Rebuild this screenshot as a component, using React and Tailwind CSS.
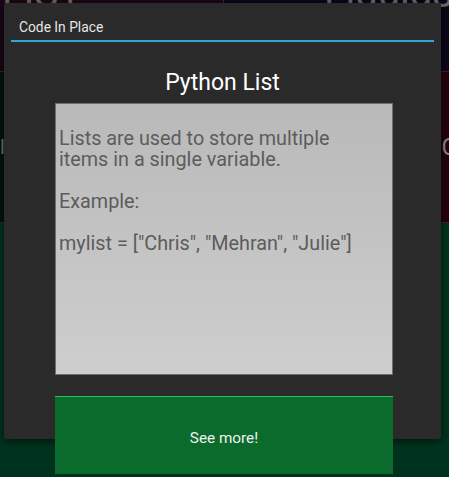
export default function App() {
  const body = "\nLists are used to store multiple\nitems in a single variable.\n\nExample:\n\nmylist = [\"Chris\", \"Mehran\", \"Julie\"]";

  return (
    <div className="relative w-[449px] h-[477px] overflow-hidden bg-[#4a1548] font-['Roboto',sans-serif]">
      {/* tiles behind the popup */}
      <div className="grid grid-cols-[223px_1fr] grid-rows-[71px_150px_1fr] gap-px h-full">
        <div className="bg-[#1a0716] flex items-start pl-[2px] overflow-hidden">
          <span className="text-[40px] leading-none text-[#6a6a6a] -translate-y-[26px]">LIST</span>
        </div>
        <div className="bg-[#0c0618] flex items-start justify-end pr-[2px] overflow-hidden">
          <span className="text-[40px] leading-none text-[#6a6a6a] -translate-y-[26px] translate-x-[6px]">Liquids</span>
        </div>
        <div className="bg-[#03140c] flex items-center overflow-hidden">
          <span className="text-[20px] text-[#777]">ll</span>
        </div>
        <div className="bg-[#25000f] flex items-center justify-end overflow-hidden">
          <span className="text-[24px] text-[#888] translate-x-[8px]">C</span>
        </div>
        <div className="col-span-2 bg-[#00331d]" />
      </div>

      {/* popup */}
      <div className="absolute left-[4px] top-[3px] w-[437px] h-[436px] bg-[#2a2a2a] rounded-[2px] shadow-[0_2px_8px_rgba(0,0,0,0.6)] flex flex-col">
        <div className="shrink-0 h-[37px] pl-[15px] pt-[14px] text-[13.8px] leading-[20px] text-[#e6e6e6]">Code In Place</div>
        <div className="shrink-0 h-[2px] mx-[7px] bg-[#2fa7d4]" />
        <div className="shrink-0 mt-[27px] text-center text-[23px] leading-[28px] text-white">Python List</div>
        <div className="shrink-0 mt-[6px] ml-[51px] w-[338px] h-[272px] border border-[#6e6e6e] bg-gradient-to-b from-[#b9b9b9] to-[#cecece] pl-[3px] pt-[3px] whitespace-pre-line text-[19.8px] leading-[21px] text-[#5c5c5c]">
          {body}
        </div>
        <button className="shrink-0 mt-[21px] ml-[51px] w-[338px] h-[78px] pt-[5px] bg-[#0a6b2d] border-t border-[#23c05a] text-[15.3px] text-[#f0f0f0]">
          See more!
        </button>
      </div>
    </div>
  );
}
